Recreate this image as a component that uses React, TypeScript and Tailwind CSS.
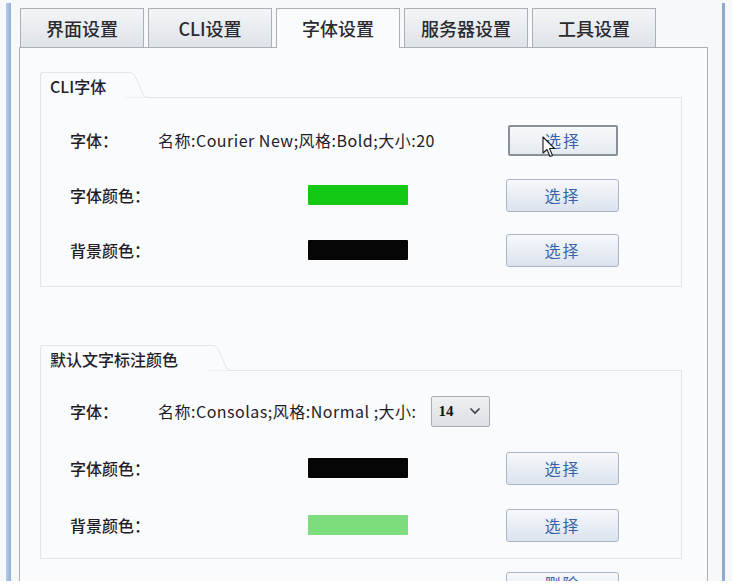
import React from "react";

const FONT = '"Noto Sans CJK SC", "Noto Sans", sans-serif';

function Tab({ label, active }: { label: string; active?: boolean }) {
  return (
    <div
      className={
        active
          ? "relative z-10 -mb-px flex h-[40px] w-[124px] items-center justify-center border border-b-0 border-[#a9b0b8] bg-[#fafbfc] text-[18px] font-medium text-[#2a2a30]"
          : "flex h-[39px] w-[124px] items-center justify-center border border-b-0 border-[#a9b0b8] bg-gradient-to-b from-[#f3f5f7] to-[#dfe3e8] text-[18px] font-medium text-[#2a2a30]"
      }
    >
      {label}
    </div>
  );
}

function Btn({ focused }: { focused?: boolean }) {
  return (
    <div
      className={
        focused
          ? "flex h-[31px] w-[110px] ml-[2px] items-center justify-center rounded-[2px] border-2 border-[#8a9098] bg-gradient-to-b from-[#f7f9fb] to-[#e6ebf1] text-[16px] tracking-[2px] text-[#3a63a8]"
          : "flex h-[33px] w-[113px] items-center justify-center rounded-[3px] border border-[#aab6c6] bg-gradient-to-b from-[#f6f8fb] to-[#dbe3ee] text-[16px] tracking-[2px] text-[#3a63a8]"
      }
    >
      选择
    </div>
  );
}

function Swatch({ color }: { color: string }) {
  return <div className={`h-[20px] w-[100px] rounded-[1px] ${color}`} />;
}

function Row({ label, middle, button }: { label: string; middle: React.ReactNode; button?: React.ReactNode }) {
  return (
    <div className="flex h-[32px] items-center">
      <div className="w-[88px] text-[16px] font-medium text-[#1f1b28]">{label}</div>
      <div className="flex w-[348px] items-center">{middle}</div>
      {button}
    </div>
  );
}

function GroupBox({
  title,
  tabWidth,
  children,
  body,
}: {
  title: string;
  tabWidth: string;
  children: React.ReactNode;
  body: string;
}) {
  return (
    <div className="flex flex-col">
      <div className="relative z-10 -mb-px flex h-[26px]">
        <div
          className={`flex h-[26px] items-center rounded-tl-[3px] border-l border-t border-[#e2e5ea] bg-[#fafbfc] pl-[9px] text-[16px] font-medium text-[#231d2c] ${tabWidth}`}
        >
          {title}
        </div>
        <svg width="22" height="26" viewBox="0 0 22 26" className="block">
          <path d="M0 0.5 L5 0.5 Q9 0.8 12 8 L17 20 Q19 25 22 25.5 L0 25.5 Z" fill="#fafbfc" />
          <path d="M0 0.5 L5 0.5 Q9 0.8 12 8 L17 20 Q19 25 22 25.5" fill="none" stroke="#e2e5ea" strokeWidth="1" />
        </svg>
      </div>
      <div className={`flex flex-col border border-[#e2e5ea] bg-[#fafbfc] pl-[29px] ${body}`}>{children}</div>
    </div>
  );
}

function Cursor() {
  return (
    <svg
      width="14"
      height="22"
      viewBox="0 0 14 22"
      className="absolute left-[542px] top-[136px]"
    >
      <path
        d="M1 1 L1 17 L5 13.5 L8 20.5 L10.5 19.5 L7.5 12.5 L12.5 12.5 Z"
        fill="#ffffff"
        stroke="#1a1a1a"
        strokeWidth="1.1"
        strokeLinejoin="round"
      />
    </svg>
  );
}

export default function App() {
  return (
    <div
      className="relative h-[588px] w-[732px] overflow-hidden bg-white"
      style={{ fontFamily: FONT }}
    >
      <div className="flex h-[581px] overflow-hidden bg-[#f7f8fa]">
        <div className="ml-[6px] mt-[3px] w-[5px] bg-gradient-to-r from-[#b8cae4] to-[#94afd6]" />
        <div className="ml-[8px] flex w-[689px] flex-col pt-[8px]">
          <div className="flex items-end gap-[4px] pl-[1px]">
            <Tab label="界面设置" />
            <Tab label="CLI设置" />
            <Tab label="字体设置" active />
            <Tab label="服务器设置" />
            <Tab label="工具设置" />
          </div>
          <div className="flex flex-1 flex-col border border-b-0 border-[#a9b0b8] bg-[#fafbfc] pl-[20px] pr-[25px] pt-[24px]">
            <GroupBox title="CLI字体" tabWidth="w-[85px]" body="h-[190px] pt-[26px] gap-[23px]">
              <Row
                label="字体："
                middle={<span className="text-[16px] tracking-[0.5px] text-[#1f1b28]">名称:Courier New;风格:Bold;大小:20</span>}
                button={<Btn focused />}
              />
              <Row label="字体颜色：" middle={<div className="pl-[150px]"><Swatch color="bg-[#15c815]" /></div>} button={<Btn />} />
              <Row label="背景颜色：" middle={<div className="pl-[150px]"><Swatch color="bg-[#050505]" /></div>} button={<Btn />} />
            </GroupBox>
            <div className="h-[58px]" />
            <GroupBox title="默认文字标注颜色" tabWidth="w-[168px]" body="h-[189px] pt-[24px] gap-[25px]">
              <Row
                label="字体："
                middle={
                  <div className="flex items-center">
                    <span className="text-[16px] tracking-[0.5px] text-[#1f1b28]">名称:Consolas;风格:Normal ;大小:</span>
                    <div className="ml-[14px] flex h-[31px] w-[59px] items-center justify-between rounded-[2px] border border-[#a8adb4] bg-gradient-to-b from-[#eef0f2] to-[#dde0e4] pl-[7px] pr-[8px]">
                      <span
                        className="text-[15px] font-bold text-[#111]"
                        style={{ fontFamily: '"Liberation Serif", serif' }}
                      >
                        14
                      </span>
                      <svg width="12" height="8" viewBox="0 0 12 8">
                        <path d="M1.5 1.5 L6 6 L10.5 1.5" fill="none" stroke="#3b3f46" strokeWidth="1.6" />
                      </svg>
                    </div>
                  </div>
                }
              />
              <Row label="字体颜色：" middle={<div className="pl-[150px]"><Swatch color="bg-[#050505]" /></div>} button={<Btn />} />
              <Row label="背景颜色：" middle={<div className="pl-[150px]"><Swatch color="bg-[#7ddc7d]" /></div>} button={<Btn />} />
            </GroupBox>
            <div className="ml-[466px] mt-[13px] flex h-[33px] w-[113px] shrink-0 items-start justify-center rounded-[3px] border border-[#aab6c6] bg-gradient-to-b from-[#f6f8fb] to-[#dbe3ee] pt-[0px] text-[16px] leading-[20px] tracking-[2px] text-[#3a63a8]">
              删除
            </div>
          </div>
        </div>
        <div className="ml-[14px] mt-[3px] w-[3px] bg-[#8fa9cf]" />
      </div>
      <Cursor />
    </div>
  );
}
